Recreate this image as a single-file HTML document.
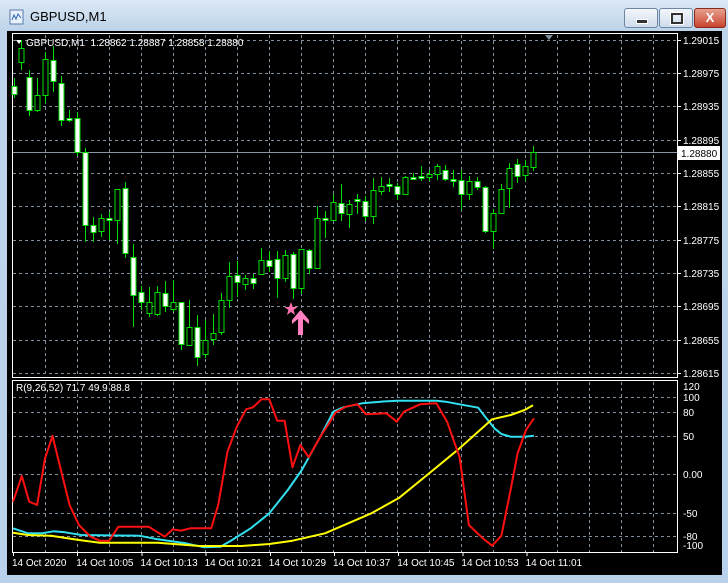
<!DOCTYPE html>
<html><head><meta charset="utf-8"><style>
html,body{margin:0;padding:0;width:728px;height:583px;overflow:hidden;background:#b9d1ea;font-family:"Liberation Sans",sans-serif}
#win{position:absolute;left:0;top:0;width:728px;height:583px;background:linear-gradient(#dbe8f5,#bed4ea 30px,#b9d1ea);}
#title{position:absolute;left:30px;top:9px;font-size:13px;color:#000}
.btn{position:absolute;top:8px;height:18px;border:1px solid #6d86a4;border-radius:3px;background:linear-gradient(#f3f7fb,#cfdcec)}
#chart{position:absolute;left:7px;top:31px;width:715px;height:544px;background:#000}
svg text{font-family:"Liberation Sans",sans-serif;font-size:10px;fill:#fff}
</style></head><body>
<div id="win">
<svg style="position:absolute;left:9px;top:9px" width="16" height="16"><rect x="1" y="1" width="13" height="14" fill="#e8f0fa" stroke="#5a7aa8"/><path d="M3 11 L5 6 L7 10 L9 5 L12 9" stroke="#2a62b0" fill="none"/></svg>
<div id="title">GBPUSD,M1</div>
<div class="btn" style="left:624px;width:32px"><div style="position:absolute;left:11px;top:10px;width:10px;height:3px;background:#333;border:1px solid #fff"></div></div>
<div class="btn" style="left:659px;width:32px"><div style="position:absolute;left:11px;top:4px;width:8px;height:7px;border:2px solid #333;outline:1px solid #fff"></div></div>
<div class="btn" style="left:694px;width:30px;background:linear-gradient(#e8a090,#c8452f);border-color:#8a2a1a;color:#fff;font-weight:bold;font-size:13px;text-align:center;line-height:18px">X</div>
<div id="chart"></div>
<svg id="s" style="position:absolute;left:0;top:0" width="728" height="583"></svg>
</div>
<script>
var s=document.getElementById('s');var h='';
function L(x1,y1,x2,y2,c,d,w){h+='<line x1="'+x1+'" y1="'+y1+'" x2="'+x2+'" y2="'+y2+'" stroke="'+c+'" stroke-width="'+(w||1)+'"'+(d?' stroke-dasharray="3,3"':'')+' shape-rendering="crispEdges"/>';}
function T(x,y,t,a){h+='<text x="'+x+'" y="'+y+'"'+(a?' text-anchor="'+a+'"':'')+'>'+t+'</text>';}
h+='<rect x="12.5" y="33.5" width="665" height="344" fill="none" stroke="#fff"/>';
h+='<rect x="12.5" y="380.5" width="665" height="172" fill="none" stroke="#fff"/>';
for(var x=45;x<677;x+=32){L(x+.5,35,x+.5,377,'#8090a0',1);L(x+.5,382,x+.5,552,'#8090a0',1);}
var py=[40,73,106,140,173,206,240,273,306,340,373];
var pl=['1.29015','1.28975','1.28935','1.28895','1.28855','1.28815','1.28775','1.28735','1.28695','1.28655','1.28615'];
for(var i=0;i<py.length;i++){L(13,py[i]+.5,677,py[i]+.5,'#8090a0',1);L(677,py[i]+.5,681,py[i]+.5,'#fff');T(683,py[i]+4,pl[i]);}
L(13,152.5,677,152.5,'#8a96a8');
h+='<rect x="678" y="146" width="42" height="14" fill="#fff"/><text x="681" y="157" style="fill:#000">1.28880</text>';
var iy=[397,412,436,474,513,536,545],il=['100','80','50','0.00','-50','-80','-100'];
for(i=0;i<iy.length;i++){if(i<6)L(13,iy[i]+.5,677,iy[i]+.5,'#8090a0',1);T(683,iy[i]+4,il[i]);}
T(683,390,'120');
h+='<path d="M545 35 L553 35 L549 40Z" fill="#8090a0"/>';
h+='<path d="M16 40 L22 40 L19 44Z" fill="#fff"/>';
T(26,46,'GBPUSD,M1&#160; 1.28862 1.28887 1.28858 1.28880');
T(16,391,'R(9,26,52) 71.7 49.9 88.8');
var tl=['14 Oct 2020','14 Oct 10:05','14 Oct 10:13','14 Oct 10:21','14 Oct 10:29','14 Oct 10:37','14 Oct 10:45','14 Oct 10:53','14 Oct 11:01'];
for(i=0;i<9;i++){T(12+i*64.2,566,tl[i]);L(13+i*64.2+.5,552,13+i*64.2+.5,556,'#fff');}
var c=[[14,86,94,1,78,98],[21,48,62,0,40,70],[29,77,110,1,70,116],[37,95,110,0,78,112],[45,59,95,0,52,103],[53,60,81,1,46,92],[61,83,120,1,76,126],[69,118,120,1,110,122],[77,118,152,1,112,156],[85,152,225,1,148,242],[93,225,232,1,217,242],[101,218,231,0,214,237],[109,218,219,1,212,240],[117,189,220,0,189,244],[125,188,253,1,182,258],[133,257,295,1,244,327],[141,292,302,1,286,310],[149,302,313,0,287,317],[157,292,314,0,286,316],[165,293,306,1,281,312],[173,302,309,0,280,312],[181,302,344,1,302,350],[189,327,345,0,300,345],[197,327,357,1,315,366],[205,340,354,0,320,358],[213,333,339,0,314,345],[221,300,332,0,293,335],[229,276,300,0,262,308],[237,275,282,1,261,297],[245,278,284,0,275,290],[253,278,283,1,274,289],[261,260,274,0,248,274],[269,260,266,1,251,272],[277,259,278,1,251,298],[285,255,278,0,250,282],[293,254,288,1,252,299],[301,249,288,0,249,294],[309,250,268,1,249,274],[317,218,268,0,206,268],[325,218,220,1,211,238],[333,202,220,0,194,220],[341,203,213,1,184,221],[349,204,214,0,200,228],[357,199,201,1,194,214],[365,201,216,1,196,221],[373,190,216,0,178,224],[381,186,191,0,177,195],[389,184,186,1,178,192],[397,186,194,1,183,200],[405,177,194,0,176,195],[413,177,179,1,173,180],[421,176,178,1,166,181],[429,174,177,0,170,181],[437,166,174,0,164,180],[445,170,179,1,165,181],[453,179,181,1,170,187],[461,180,194,1,170,210],[469,181,194,0,176,200],[477,181,187,1,177,190],[485,187,231,1,186,233],[493,213,231,0,209,249],[501,189,213,0,184,213],[509,168,188,0,163,208],[517,164,176,1,159,183],[525,166,175,0,160,181],[533,152,167,0,146,171]];
c.forEach(function(k){L(k[0]+.5,k[4],k[0]+.5,k[5],'#00e000');var ht=Math.max(k[2]-k[1],2);h+='<rect x="'+(k[0]-2)+'" y="'+(k[1]+.5)+'" width="5" height="'+ht+'" fill="'+(k[3]?'#fff':'#000')+'" stroke="#00e000" stroke-width="1"/>';});
h+='<path d="M291 302 L292.8 307 L297.5 307 L293.7 310 L295 315 L291 312 L287 315 L288.3 310 L284.5 307 L289.2 307Z" fill="#ff6fae"/>';
h+='<path d="M300.5 310 L309 320 L309 324 L303 319 L303 335 L298 335 L298 319 L292 324 L292 320Z" fill="#ff80c0"/>';
function P(pts,col){var d='';for(var j=0;j<pts.length;j+=2){d+=(j?'L':'M')+(pts[j]/2.154).toFixed(1)+' '+(370+pts[j+1]/3).toFixed(1);}h+='<path d="'+d+'" fill="none" stroke="'+col+'" stroke-width="2" stroke-linejoin="round"/>';}
P([28,475,60,490,90,490,115,484,140,487,175,495,300,497,340,508,400,520,440,532,475,530,500,510,540,475,580,430,620,360,650,300,690,200,718,125,740,112,780,100,820,95,855,92,940,92,960,95,990,103,1030,113,1045,140,1065,175,1080,192,1100,200,1130,200,1150,197],'#30e0f0');
P([28,488,60,495,110,497,170,510,215,518,340,518,430,528,520,528,580,522,630,512,700,490,800,430,860,383,920,315,990,235,1060,148,1100,135,1130,120,1148,106],'#ffff00');
P([28,395,47,318,63,395,80,405,97,265,113,198,150,405,170,465,195,500,215,512,235,512,255,470,270,470,320,470,355,500,372,478,390,482,410,475,455,475,470,405,490,245,510,170,530,118,545,112,563,88,580,88,597,152,613,152,630,292,647,225,665,262,690,200,705,168,723,127,745,110,770,103,788,133,832,130,855,155,870,125,905,103,940,100,963,155,990,262,1010,465,1040,505,1060,527,1080,497,1100,358,1115,250,1133,180,1150,145],'#ff1010');
s.innerHTML=h;
</script>
</body></html>
